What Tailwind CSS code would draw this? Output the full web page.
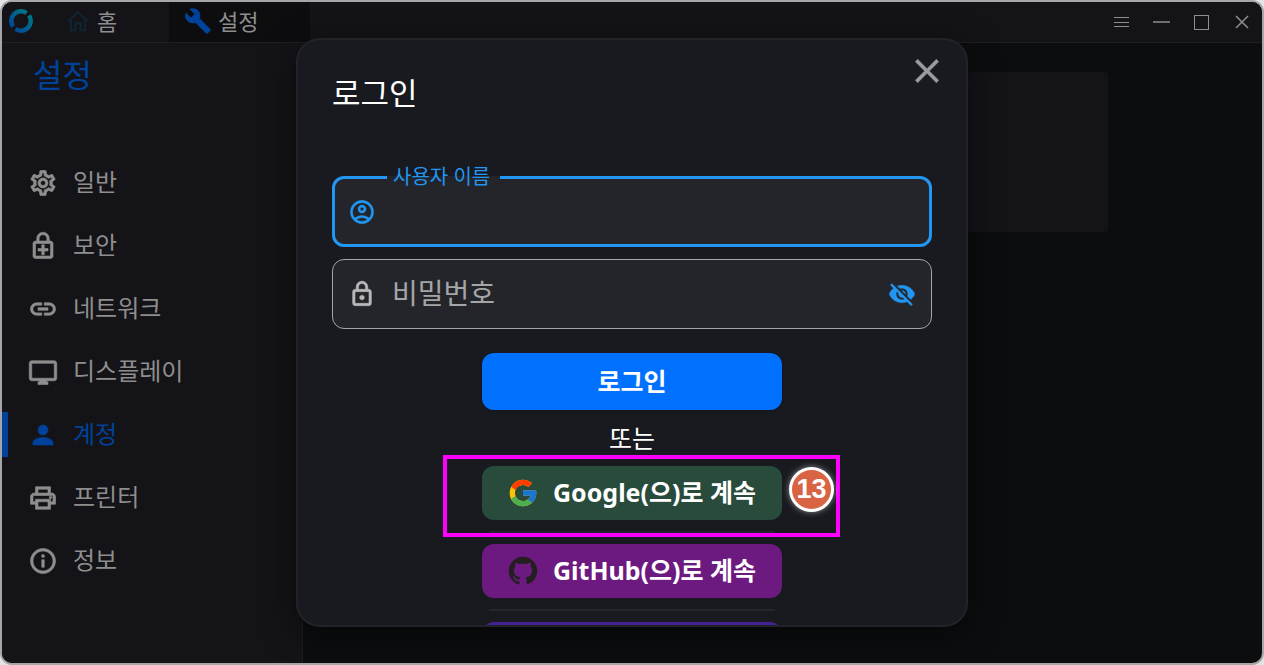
<!DOCTYPE html>
<html lang="ko">
<head>
    <meta charset="UTF-8">
    <meta name="viewport" content="width=device-width, initial-scale=1.0">
    <title>설정</title>
    <script src="https://cdn.jsdelivr.net/npm/@tailwindcss/browser@4"></script>
</head>
<body class="bg-[#e4e4e4] font-['Noto_Sans','Noto_Sans_CJK_KR',sans-serif]">
    <div class="relative h-screen flex flex-col overflow-hidden rounded-xl border-2 border-[#a6a6a6] bg-[#0c0d0f]">

        <!-- Title bar -->
        <header class="h-[41px] shrink-0 flex items-stretch justify-between bg-[#141418] border-b border-[#1f2023] text-[#8e8e8e]">
            <div class="flex items-stretch">
                <div class="w-[47px] pl-[7px] pb-0.5 flex items-center">
                    <svg class="size-6" viewBox="0 0 24 24" fill="none" stroke-width="4.500">
                        <defs>
                            <linearGradient id="ring" gradientUnits="userSpaceOnUse" x1="2" y1="20" x2="20" y2="3">
                                <stop offset="0" stop-color="#00449a"/>
                                <stop offset="1" stop-color="#007a80"/>
                            </linearGradient>
                        </defs>
                        <path stroke="url(#ring)" d="M4 17.500A9.700 9.700 0 0 1 17.500 4"/>
                        <path stroke="url(#ring)" d="M20 6.500A9.700 9.700 0 0 1 6.500 20"/>
                    </svg>
                </div>
                <a href="#" class="w-[120px] pl-4 pb-0.5 flex items-center gap-1.5 text-[22px]">
                    <svg class="size-[26px] text-[#10242f]" viewBox="0 0 24 24" fill="none" stroke="currentColor" stroke-width="2">
                        <path d="M2.500 12.500L12 3.800l9.500 8.700"/>
                        <path d="M5.500 10v10.500h4V14h5v6.500h4V10"/>
                    </svg>
                    <span>홈</span>
                </a>
                <a href="#" class="w-[141px] pl-[15px] pb-0.5 flex items-center gap-1.5 text-[22px] bg-[#0d0d0f]">
                    <svg class="size-7 text-[#00429a]" viewBox="0 0 24 24" fill="currentColor">
                        <path d="M22.700 19l-9.100-9.100c.9-2.300.4-5-1.500-6.900-2-2-5-2.400-7.400-1.300L9 6 6 9 1.600 4.700C.4 7.100.9 10.100 2.900 12.100c1.900 1.900 4.600 2.400 6.900 1.500l9.100 9.100c.4.4 1 .4 1.400 0l2.300-2.300c.5-.4.5-1.100.1-1.400z"/>
                    </svg>
                    <span>설정</span>
                </a>
            </div>
            <div class="flex items-stretch pb-px">
                <button type="button" aria-label="메뉴" class="w-10 flex items-center justify-center">
                    <svg class="size-5" viewBox="0 0 20 20" stroke="currentColor"><path d="M2 5.500h15M2 10.500h15M2 14.500h15"/></svg>
                </button>
                <button type="button" aria-label="최소화" class="w-10 flex items-center justify-center">
                    <svg class="size-5" viewBox="0 0 20 20" stroke="currentColor"><path d="M1 10h17" stroke-width="1.500"/></svg>
                </button>
                <button type="button" aria-label="최대화" class="w-10 flex items-center justify-center">
                    <svg class="size-5" viewBox="0 0 20 20" fill="none" stroke="currentColor"><rect x="2.500" y="3.500" width="14" height="14"/></svg>
                </button>
                <button type="button" aria-label="닫기" class="w-10 flex items-center justify-center">
                    <svg class="size-5" viewBox="0 0 20 20" stroke="currentColor" stroke-width="1.500"><path d="M4 4l12 12M16 4L4 16"/></svg>
                </button>
            </div>
        </header>

        <div class="flex-1 min-h-0 flex">
            <!-- Sidebar -->
            <aside class="w-[301px] shrink-0 bg-[#141418] border-r border-[#1c1c20]">
                <h1 class="pl-[31px] pt-2.5 text-[32px] leading-[44px] text-[#00429a]">설정</h1>
                <nav class="mt-[63px] flex flex-col gap-[18px] text-2xl text-[#8e8e8e]">
                    <a href="#" class="h-[45px] pl-[26px] flex items-center gap-[15px]">
                        <svg class="size-[30px]" viewBox="0 0 24 24" fill="currentColor" stroke="currentColor" stroke-width=".5"><path d="M19.430 12.980c.04-.32.07-.64.07-.98 0-.34-.03-.66-.07-.98l2.110-1.650c.19-.15.24-.42.12-.64l-2-3.460c-.09-.16-.26-.25-.44-.25-.06 0-.12.01-.17.03l-2.490 1c-.52-.4-1.080-.73-1.690-.98l-.38-2.650C14.460 2.180 14.250 2 14 2h-4c-.25 0-.46.18-.49.42l-.38 2.650c-.61.25-1.170.59-1.690.98l-2.490-1c-.06-.02-.12-.03-.18-.03-.17 0-.34.09-.43.25l-2 3.460c-.13.22-.07.49.12.64l2.110 1.650c-.04.32-.07.65-.07.98 0 .33.03.66.07.98l-2.110 1.650c-.19.15-.24.42-.12.64l2 3.460c.09.16.26.25.44.25.06 0 .12-.01.17-.03l2.490-1c.52.4 1.080.73 1.690.98l.38 2.650c.03.24.24.42.49.42h4c.25 0 .46-.18.49-.42l.38-2.650c.61-.25 1.170-.59 1.690-.98l2.490 1c.06.02.12.03.18.03.17 0 .34-.09.43-.25l2-3.460c.12-.22.07-.49-.12-.64l-2.110-1.650zm-1.980-1.710c.04.31.05.52.05.73 0 .21-.02.43-.05.73l-.14 1.130.89.7 1.080.84-.7 1.210-1.270-.51-1.040-.42-.9.68c-.43.32-.84.56-1.250.73l-1.060.43-.16 1.130-.2 1.350h-1.400l-.19-1.350-.16-1.130-1.060-.43c-.43-.18-.83-.41-1.230-.71l-.91-.7-1.060.43-1.270.51-.7-1.210 1.080-.84.89-.7-.14-1.130c-.03-.31-.05-.54-.05-.74s.02-.43.05-.73l.14-1.130-.89-.7-1.080-.84.7-1.210 1.270.51 1.040.42.9-.68c.43-.32.84-.56 1.250-.73l1.060-.43.16-1.130.2-1.350h1.390l.19 1.350.16 1.130 1.060.43c.43.18.83.41 1.230.71l.91.7 1.060-.43 1.270-.51.7 1.210-1.070.85-.89.7.14 1.130zM12 8c-2.210 0-4 1.790-4 4s1.790 4 4 4 4-1.790 4-4-1.790-4-4-4zm0 6c-1.100 0-2-.9-2-2s.9-2 2-2 2 .9 2 2-.9 2-2 2z"/></svg>
                        <span class="pb-0.5">일반</span>
                    </a>
                    <a href="#" class="h-[45px] pl-[26px] flex items-center gap-[15px]">
                        <svg class="size-[30px]" viewBox="0 0 24 24" fill="currentColor" stroke="currentColor" stroke-width=".5"><path d="M18 8h-1V6c0-2.760-2.240-5-5-5S7 3.240 7 6v2H6c-1.100 0-2 .9-2 2v10c0 1.100.9 2 2 2h12c1.100 0 2-.9 2-2V10c0-1.100-.9-2-2-2zM8.900 6c0-1.710 1.390-3.100 3.100-3.100s3.100 1.390 3.100 3.100v2H8.900V6zM18 20H6V10h12v10zm-7-1h2v-3h3v-2h-3v-3h-2v3H8v2h3z"/></svg>
                        <span class="pb-0.5">보안</span>
                    </a>
                    <a href="#" class="h-[45px] pl-[26px] flex items-center gap-[15px]">
                        <svg class="size-[30px]" viewBox="0 0 24 24" fill="currentColor" stroke="currentColor" stroke-width=".5"><path d="M3.900 12c0-1.710 1.390-3.100 3.100-3.100h4V7H7c-2.760 0-5 2.240-5 5s2.240 5 5 5h4v-1.900H7c-1.710 0-3.100-1.390-3.100-3.100zM8 13h8v-2H8v2zm9-6h-4v1.900h4c1.710 0 3.100 1.390 3.100 3.100s-1.390 3.100-3.100 3.100h-4V17h4c2.760 0 5-2.240 5-5s-2.240-5-5-5z"/></svg>
                        <span class="pb-0.5">네트워크</span>
                    </a>
                    <a href="#" class="h-[45px] pl-[26px] flex items-center gap-[15px]">
                        <svg class="size-[30px]" viewBox="0 0 24 24" fill="currentColor" stroke="currentColor" stroke-width=".5"><path d="M21 3H3c-1.100 0-2 .9-2 2v12c0 1.100.9 2 2 2h6v1H8v2h8v-2h-1v-1h6c1.100 0 2-.9 2-2V5c0-1.100-.9-2-2-2zm0 14H3V5h18v12z"/></svg>
                        <span class="pb-0.5">디스플레이</span>
                    </a>
                    <a href="#" aria-current="page" class="h-[45px] pl-5 border-l-6 border-[#00429a] flex items-center gap-[15px] text-[#00429a]">
                        <svg class="size-[30px]" viewBox="0 0 24 24" fill="currentColor" stroke="currentColor" stroke-width=".5"><path d="M12 12c2.210 0 4-1.790 4-4s-1.790-4-4-4-4 1.790-4 4 1.790 4 4 4zm0 2c-2.670 0-8 1.340-8 4v2h16v-2c0-2.660-5.330-4-8-4z"/></svg>
                        <span class="pb-0.5">계정</span>
                    </a>
                    <a href="#" class="h-[45px] pl-[26px] flex items-center gap-[15px]">
                        <svg class="size-[30px]" viewBox="0 0 24 24" fill="currentColor" stroke="currentColor" stroke-width=".5"><path d="M19 8h-1V3H6v5H5c-1.660 0-3 1.340-3 3v6h4v4h12v-4h4v-6c0-1.660-1.340-3-3-3zM8 5h8v3H8V5zm8 12v2H8v-4h8v2zm2-2v-2H6v2H4v-4c0-.55.45-1 1-1h14c.55 0 1 .45 1 1v4h-2z"/><circle cx="18" cy="11.500" r="1"/></svg>
                        <span class="pb-0.5">프린터</span>
                    </a>
                    <a href="#" class="h-[45px] pl-[26px] flex items-center gap-[15px]">
                        <svg class="size-[30px]" viewBox="0 0 24 24" fill="currentColor" stroke="currentColor" stroke-width=".5"><path d="M11 7h2v2h-2zm0 4h2v6h-2zm1-9C6.480 2 2 6.480 2 12s4.480 10 10 10 10-4.480 10-10S17.520 2 12 2zm0 18c-4.410 0-8-3.590-8-8s3.590-8 8-8 8 3.590 8 8-3.590 8-8 8z"/></svg>
                        <span class="pb-0.5">정보</span>
                    </a>
                </nav>
            </aside>

            <main class="flex-1 pt-[29px]">
                <div class="max-w-[650px] h-40 mx-auto rounded bg-[#141418]"></div>
            </main>
        </div>

        <!-- Login dialog -->
        <div class="absolute inset-0 flex justify-center py-9">
            <div role="dialog" aria-labelledby="login-title" class="w-full max-w-[672px] flex flex-col overflow-hidden rounded-3xl border-2 border-[#222329] bg-[#181a1f] text-white shadow-[0_8px_32px_rgba(0,0,0,0.5)]">
                <div class="flex items-start justify-between pl-[34px] pr-[19px] pt-[11px]">
                    <h2 id="login-title" class="mt-[22px] text-[31px] leading-10">로그인</h2>
                    <button type="button" aria-label="닫기" class="text-[#9c9c9e]">
                        <svg class="size-10" viewBox="0 0 24 24" fill="currentColor" stroke="currentColor" stroke-width=".3"><path d="M19 6.410L17.590 5 12 10.590 6.410 5 5 6.410 10.590 12 5 17.590 6.410 19 12 13.410 17.590 19 19 17.590 13.410 12z"/></svg>
                    </button>
                </div>

                <form class="mt-[50px] px-[34px] flex flex-col items-center" onsubmit="return false">
                    <fieldset class="w-full h-[84px] rounded-xl border-3 border-[#2196f3] bg-[#24252a] text-[#2196f3]">
                        <legend class="ml-[52px] pl-1.5 pr-2.5 h-7"><label for="username" class="block text-xl leading-7">사용자 이름</label></legend>
                        <div class="h-[41px] px-[13px] flex items-center gap-4">
                            <svg class="size-7 shrink-0" viewBox="0 0 24 24" fill="currentColor" stroke="currentColor" stroke-width=".3"><path d="M12 2C6.480 2 2 6.480 2 12s4.480 10 10 10 10-4.480 10-10S17.520 2 12 2zM7.350 18.500C8.660 17.560 10.260 17 12 17s3.340.56 4.650 1.500C15.340 19.440 13.740 20 12 20s-3.340-.56-4.650-1.500zm10.790-1.380C16.450 15.800 14.320 15 12 15s-4.450.8-6.140 2.120C4.700 15.730 4 13.950 4 12c0-4.420 3.580-8 8-8s8 3.580 8 8c0 1.950-.7 3.730-1.860 5.120zM12 6c-1.930 0-3.500 1.570-3.500 3.500S10.070 13 12 13s3.500-1.570 3.500-3.500S13.930 6 12 6zm0 5c-.83 0-1.500-.67-1.500-1.500S11.170 8 12 8s1.500.67 1.500 1.500S12.830 11 12 11z"/></svg>
                            <input id="username" type="text" class="flex-1 min-w-0 h-10 bg-transparent outline-none text-[28px] text-white">
                        </div>
                    </fieldset>

                    <div class="mt-3 w-full h-[70px] px-[15px] flex items-center gap-4 rounded-xl border border-[#a5a5a7] bg-[#24252a] text-[#b9b9bb]">
                        <svg class="size-7 shrink-0" viewBox="0 0 24 24" fill="currentColor" stroke="currentColor" stroke-width=".5"><path d="M18 8h-1V6c0-2.760-2.240-5-5-5S7 3.240 7 6v2H6c-1.100 0-2 .9-2 2v10c0 1.100.9 2 2 2h12c1.100 0 2-.9 2-2V10c0-1.100-.9-2-2-2zM9 6c0-1.660 1.340-3 3-3s3 1.340 3 3v2H9V6zm9 14H6V10h12v10zm-6-3c1.100 0 2-.9 2-2s-.9-2-2-2-2 .9-2 2 .9 2 2 2z"/></svg>
                        <input type="password" aria-label="비밀번호" placeholder="비밀번호" class="flex-1 min-w-0 pb-0.5 bg-transparent outline-none text-[28px] placeholder:text-[#a5a5a7]">
                        <button type="button" aria-label="비밀번호 표시" class="text-[#2196f3]">
                            <svg class="size-7" viewBox="0 0 24 24" fill="currentColor" stroke="currentColor" stroke-width=".3"><path d="M12 7c2.760 0 5 2.240 5 5 0 .65-.13 1.260-.36 1.830l2.920 2.920c1.510-1.260 2.700-2.890 3.430-4.750-1.730-4.390-6-7.500-11-7.500-1.400 0-2.740.25-3.980.7l2.160 2.160C10.740 7.130 11.350 7 12 7zM2 4.270l2.280 2.280.46.46C3.080 8.300 1.780 10.020 1 12c1.730 4.390 6 7.500 11 7.500 1.550 0 3.030-.3 4.380-.84l.42.42L19.730 22 21 20.730 3.270 3 2 4.270zM7.530 9.800l1.550 1.550c-.05.21-.08.43-.08.65 0 1.660 1.340 3 3 3 .22 0 .44-.03.65-.08l1.550 1.550c-.67.33-1.410.53-2.200.53-2.760 0-5-2.240-5-5 0-.79.2-1.530.53-2.200zm4.310-.78l3.150 3.150.02-.16c0-1.660-1.340-3-3-3l-.17.01z"/></svg>
                        </button>
                    </div>

                    <button type="submit" class="mt-6 w-[300px] h-[57px] rounded-xl bg-[#0070ff] text-[25px] font-bold shadow-sm">로그인</button>
                    <p class="my-2 text-[25px] leading-10">또는</p>

                    <div class="w-[300px] flex flex-col">
                        <div class="relative">
                            <button type="button" class="w-full h-[54px] pl-[25px] flex items-center gap-[14px] rounded-xl bg-[#284b3c] text-[25px] font-bold whitespace-nowrap">
                                <svg class="size-8 shrink-0" viewBox="0 0 48 48">
                                    <path fill="#FFC107" d="M43.611,20.083H42V20H24v8h11.303c-1.649,4.657-6.080,8-11.303,8c-6.627,0-12-5.373-12-12c0-6.627,5.373-12,12-12c3.059,0,5.842,1.154,7.961,3.039l5.657-5.657C34.046,6.053,29.268,4,24,4C12.955,4,4,12.955,4,24c0,11.045,8.955,20,20,20c11.045,0,20-8.955,20-20C44,22.659,43.862,21.350,43.611,20.083z"/>
                                    <path fill="#FF3D00" d="M6.306,14.691l6.571,4.819C14.655,15.108,18.961,12,24,12c3.059,0,5.842,1.154,7.961,3.039l5.657-5.657C34.046,6.053,29.268,4,24,4C16.318,4,9.656,8.337,6.306,14.691z"/>
                                    <path fill="#4CAF50" d="M24,44c5.166,0,9.860-1.977,13.409-5.192l-6.190-5.238C29.211,35.091,26.715,36,24,36c-5.202,0-9.619-3.317-11.283-7.946l-6.522,5.025C9.505,39.556,16.227,44,24,44z"/>
                                    <path fill="#1976D2" d="M43.611,20.083H42V20H24v8h11.303c-0.792,2.237-2.231,4.166-4.087,5.571l6.190,5.238C36.971,39.205,44,34,44,24C44,22.659,43.862,21.350,43.611,20.083z"/>
                                </svg>
                                <span>Google(으)로 계속</span>
                            </button>
                            <!-- Step callout -->
                            <div class="absolute z-10 -top-[11px] -left-[39px] w-[397px] h-[82px] border-4 border-[#ff00ff] pointer-events-none"></div>
                            <div class="absolute z-10 top-px left-[307px] size-[45px] rounded-full border-3 border-white bg-[#d96444] shadow-[0_0_6px_rgba(255,255,255,0.5)] flex items-center justify-center font-['Liberation_Sans',sans-serif] font-bold text-[27px]">13</div>
                        </div>
                        <hr class="mt-[11px] mb-[11px] mx-[7px] border-t-2 border-[#25262b]">
                        <button type="button" class="h-[54px] pl-[25px] flex items-center gap-[14px] rounded-xl bg-[#6c1a80] text-[25px] font-bold whitespace-nowrap">
                            <svg class="size-8 shrink-0 text-[#231f20]" viewBox="-1 -1 18 18" fill="currentColor"><path d="M8 0C3.580 0 0 3.580 0 8c0 3.540 2.290 6.530 5.470 7.590.4.07.55-.17.55-.38 0-.19-.01-.82-.01-1.490-2.010.37-2.530-.49-2.690-.94-.09-.23-.48-.94-.82-1.130-.28-.15-.68-.52-.01-.53.63-.01 1.080.58 1.230.82.72 1.210 1.870.87 2.330.66.07-.52.28-.87.51-1.070-1.780-.2-3.640-.89-3.640-3.950 0-.87.31-1.590.82-2.150-.08-.2-.36-1.020.08-2.120 0 0 .67-.21 2.200.82.64-.18 1.320-.27 2-.27s1.360.09 2 .27c1.530-1.040 2.200-.82 2.200-.82.44 1.100.16 1.920.08 2.120.51.56.82 1.270.82 2.150 0 3.070-1.870 3.750-3.650 3.950.29.25.54.73.54 1.480 0 1.070-.01 1.930-.01 2.200 0 .21.15.46.55.38A8.010 8.010 0 0 0 16 8c0-4.420-3.580-8-8-8z"/></svg>
                            <span>GitHub(으)로 계속</span>
                        </button>
                        <hr class="mt-[11px] mb-[11px] mx-[7px] border-t-2 border-[#25262b]">
                        <!-- next provider, cut off by the dialog edge -->
                        <div class="h-[54px] rounded-xl bg-[#432291]"></div>
                    </div>
                </form>
            </div>
        </div>
    </div>
</body>
</html>
